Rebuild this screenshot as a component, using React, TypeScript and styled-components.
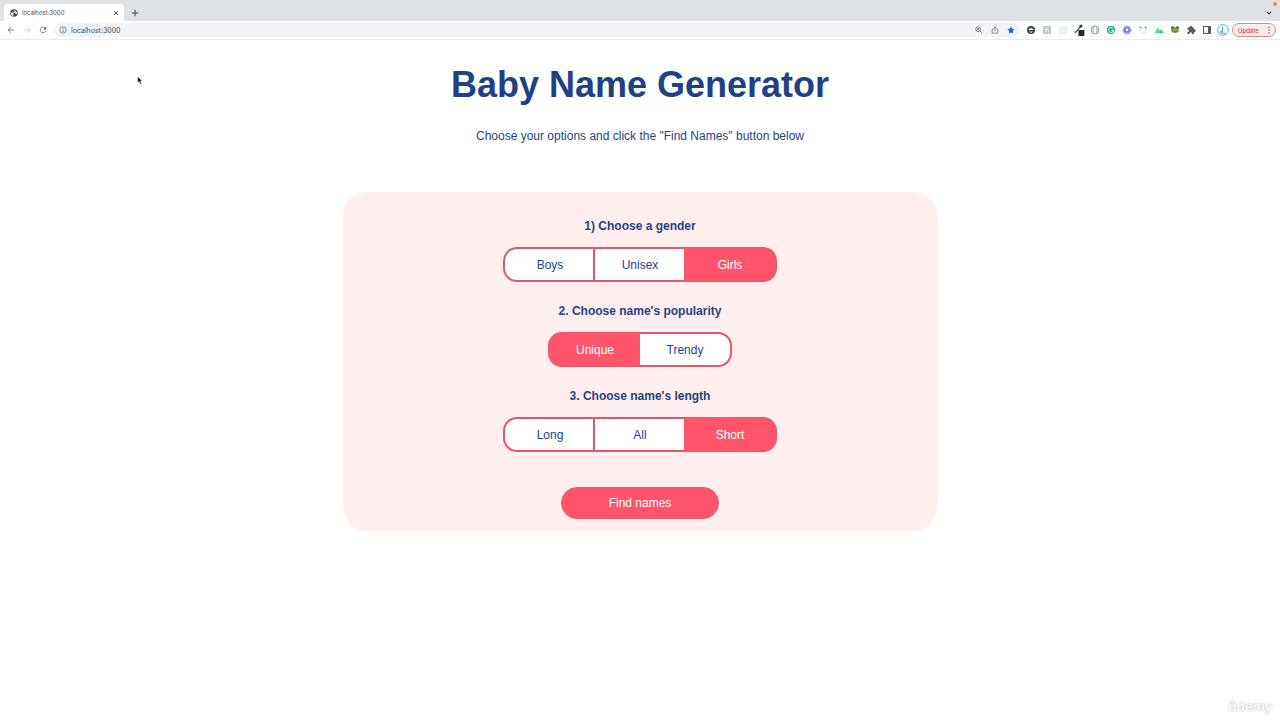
import React, { useState } from "react";
import styled, { createGlobalStyle, css } from "styled-components";

const navy = "#1f4287";
const coral = "#ff5469";
const edge = "#e4566a";

const GlobalStyle = createGlobalStyle`
  * { box-sizing: border-box; }
  body { margin: 0; background: #fff; font-family: "Liberation Sans", Arial, sans-serif; }
  button, input { font: inherit; color: inherit; margin: 0; padding: 0; border: 0; background: none; }
  button { cursor: pointer; }
  svg { display: block; flex: none; }
`;

const Screen = styled.div`
  position: relative;
  min-height: 100vh;
  overflow: hidden;
`;

const TabStrip = styled.div`
  position: relative;
  display: flex;
  align-items: flex-end;
  height: 21px;
  padding: 0 4px;
  background: #dee1e5;
  color: #45494d;
  font-family: Roboto, sans-serif;
  font-size: 6px;
`;

const Tab = styled.div`
  display: flex;
  align-items: center;
  gap: 4px;
  width: 120px;
  height: 17px;
  padding: 0 5px 0 6px;
  border-radius: 4px 4px 0 0;
  background: #fff;
`;

const TabTitle = styled.span`
  flex: 1;
  font-family: Inter, sans-serif;
`;

const StripButton = styled.button`
  display: flex;
  align-items: center;
  justify-content: center;
  width: 6px;
  height: 16px;
`;

const NewTab = styled(StripButton)`
  width: 22px;
`;

const TabMenu = styled(StripButton)`
  margin-left: auto;
  width: 14px;
`;

const Notice = styled.span`
  position: absolute;
  top: 2px;
  right: 3px;
  width: 4px;
  height: 4px;
  border-radius: 50%;
  background: #f08a3c;
`;

const Toolbar = styled.div`
  display: flex;
  align-items: center;
  height: 19px;
  padding: 0 4px 0 3px;
  border-bottom: 1px solid #ebecee;
  background: #fff;
  font-family: Inter, sans-serif;
  font-size: 7px;
`;

const ToolButton = styled.button`
  display: flex;
  align-items: center;
  justify-content: center;
  width: 16px;
  height: 14px;
  flex: none;
`;

const AddressBar = styled.label`
  display: flex;
  align-items: center;
  flex: 1;
  height: 14px;
  margin: 0 3px;
  padding: 0 1px;
  border-radius: 7px;
  background: #f2f3f5;
  color: #4a4d51;
`;

const AddressInput = styled.input`
  flex: 1;
  min-width: 0;
  outline: none;
`;

const UpdateButton = styled.button`
  display: flex;
  align-items: center;
  justify-content: space-between;
  width: 44px;
  height: 14px;
  margin-left: 1px;
  padding: 0 2px 0 5px;
  border: 1px solid #d98a90;
  border-radius: 7px;
  background: #fdecee;
  color: #c8434c;
  font-size: 6px;
  font-weight: 500;
`;

const Page = styled.main`
  display: flex;
  flex-direction: column;
  align-items: center;
  padding: 24px 16px;
  color: ${navy};
  text-align: center;
`;

const Title = styled.h1`
  margin: 0;
  font-size: 36px;
  line-height: 42px;
`;

const Intro = styled.p`
  margin: 22px 0 48px;
  font-size: 12px;
  line-height: 16px;
`;

const Card = styled.form`
  display: flex;
  flex-direction: column;
  align-items: center;
  gap: 20px;
  width: 100%;
  max-width: 594px;
  padding: 25px 16px 12px;
  border-radius: 24px;
  background: #ffeeee;
`;

const Question = styled.fieldset`
  display: flex;
  flex-direction: column;
  align-items: center;
  margin: 0;
  padding: 0;
  border: 0;
`;

const QuestionTitle = styled.legend`
  margin: 0 auto 12px;
  padding: 0;
  font-size: 12px;
  font-weight: bold;
  line-height: 18px;
`;

const Segments = styled.div`
  display: flex;
  padding: 2px;
  border-radius: 14px;
  background: ${edge};
`;

const Segment = styled.button<{ $active: boolean; $divided: boolean }>`
  width: 90px;
  height: 31px;
  background: #fff;
  font-size: 12px;
  line-height: 16px;
  &:first-child { border-radius: 12px 0 0 12px; }
  &:last-child { border-radius: 0 12px 12px 0; }
  ${(p) => p.$divided && css`box-shadow: inset -2px 0 ${edge};`}
  ${(p) => p.$active && css`background: ${coral}; box-shadow: 0 0 0 1px ${coral}; color: #fff;`}
`;

const FindButton = styled.button`
  width: 158px;
  height: 32px;
  margin-top: 15px;
  border: 1px solid #f05468;
  border-radius: 16px;
  background: ${coral};
  color: #fff;
  font-size: 12px;
`;

const Pointer = styled.svg`
  position: absolute;
  top: 76px;
  left: 137px;
`;

const Watermark = styled.span`
  position: absolute;
  right: 8px;
  bottom: 4px;
  color: #fff;
  font-family: "Noto Sans", sans-serif;
  font-size: 13px;
  font-weight: 600;
  line-height: 20px;
  text-shadow: 0 0 2px #bbb, 0 0 1px #ccc;
`;

const Icon = ({ children, size = 10, color = "#5f6368" }: { children: React.ReactNode; size?: number; color?: string }) => (
  <svg width={size} height={size} viewBox="0 0 20 20" fill="none" stroke={color} strokeWidth="2" aria-hidden="true">
    {children}
  </svg>
);

const Globe = () => (
  <Icon size={8} color="none">
    <circle cx="10" cy="10" r="9.5" fill="#45494d" />
    <path d="M2 8l5 1 3 3-2 3v3C4 17 1 13 2 8zM9 2l4 1-1 3-3 1-1 3 5 0 2 3 3-1c0-5-4-10-10-9z" fill="#dfe1e3" />
  </Icon>
);

const extensions = [
  { name: "Mask", icon: <Icon><circle cx="10" cy="10" r="8" fill="#3c3e40" stroke="none" /><path d="M5 10c0-5 10-5 10 0zM6 13h8c-2 3-6 3-8 0z" fill="#fff" stroke="none" /></Icon> },
  { name: "Honey", icon: <Icon><rect x="2" y="2" width="16" height="16" rx="2" fill="#c2c2c2" stroke="none" /><path d="M8 5v10M8 9c5-2 5 1 5 6M11 5l2-1" stroke="#fff" /></Icon> },
  { name: "Blocks", icon: <Icon><rect x="2" y="2" width="16" height="16" rx="1" fill="#ededed" stroke="none" /><circle cx="10" cy="10" r="4" stroke="#fafafa" /></Icon> },
  { name: "Colour picker", icon: <Icon size={12}><path d="M3 15L13 4" stroke="#555" strokeWidth="2.2" /><path d="M11 5l4-3" stroke="#333" strokeWidth="4" /><rect x="9" y="10" width="10" height="10" rx="1" fill="#292929" stroke="none" /></Icon> },
  { name: "JSON viewer", icon: <Icon><circle cx="10" cy="10" r="8" stroke="#777" strokeWidth="1.5" /><path d="M8 6H6v3l-1 1 1 1v3h2M12 6h2v3l1 1-1 1v3h-2" stroke="#777" strokeWidth="1.3" /></Icon> },
  { name: "Grammar", icon: <Icon><circle cx="10" cy="10" r="8.5" fill="#20bd82" stroke="none" /><path d="M14 7a5 5 0 1 0 1 4h-4M15 11v4" stroke="#e4fff4" strokeWidth="1.7" /></Icon> },
  { name: "Loom", icon: <Icon><circle cx="10" cy="10" r="7" stroke="#9799f0" strokeWidth="4" strokeDasharray="4 1" /><circle cx="10" cy="10" r="5.5" fill="#6163e8" stroke="none" /><circle cx="10" cy="10" r="2.8" fill="#fff" stroke="none" /></Icon> },
  { name: "Sketch", icon: <Icon><path d="M4 7c-1 10 8 12 11 8V9" stroke="#dedede" /><path d="M2 3l4 2M6 5l3 3M13 4l4 1-3 2" stroke="#777" strokeWidth="1.8" /></Icon> },
  { name: "Peaks", icon: <Icon><path d="M1 16L8 5l7 11z" fill="#43e79a" stroke="none" /><path d="M10 16l4-8 5 8z" fill="#20ce7d" stroke="none" /></Icon> },
  { name: "Frog", icon: <Icon><ellipse cx="10" cy="10" rx="8" ry="6" fill="#81a64a" stroke="none" /><circle cx="5" cy="5" r="3" fill="#587b2e" stroke="none" /><circle cx="15" cy="5" r="3" fill="#587b2e" stroke="none" /><path d="M4 12h12c-2 4-10 4-12 0z" fill="#b76442" stroke="none" /></Icon> },
  { name: "Extensions", icon: <Icon><path d="M3 5h4c0-5 5-5 5 0h4v4c5 0 5 5 0 5v4h-4c0-5-5-5-5 0H3v-4c4 0 4-5 0-5z" fill="#555a5e" stroke="none" /></Icon> },
  { name: "Side panel", icon: <Icon><rect x="3" y="3" width="14" height="14" stroke="#555a5e" /><path d="M12 3h5v14h-5z" fill="#555a5e" stroke="none" /></Icon> },
  { name: "Profile", icon: <Icon size={12}><circle cx="10" cy="10" r="9" fill="#effaff" stroke="#58a9c7" strokeWidth="1.5" /><path d="M9 4v9M9 13c-3-2-4 3-1 2l6 1" stroke="#4b9fc0" strokeWidth="1.7" /></Icon> },
];

type ChoiceProps = { title: string; options: string[]; initial: string };

function Choice({ title, options, initial }: ChoiceProps) {
  const [value, setValue] = useState(initial);
  return (
    <Question>
      <QuestionTitle>{title}</QuestionTitle>
      <Segments>
        {options.map((option, i) => (
          <Segment
            key={option}
            type="button"
            aria-pressed={option === value}
            $active={option === value}
            $divided={i < options.length - 1 && options[i + 1] !== value}
            onClick={() => setValue(option)}
          >
            {option}
          </Segment>
        ))}
      </Segments>
    </Question>
  );
}

export default function App() {
  return (
    <Screen>
      <GlobalStyle />
      <TabStrip>
        <Tab>
          <Globe />
          <TabTitle>localhost:3000</TabTitle>
          <StripButton aria-label="Close tab">
            <Icon size={6} color="#45494d"><path d="M3 3l14 14M17 3L3 17" strokeWidth="3" /></Icon>
          </StripButton>
        </Tab>
        <NewTab aria-label="New tab">
          <Icon size={8} color="#45494d"><path d="M10 2v16M2 10h16" strokeWidth="2.6" /></Icon>
        </NewTab>
        <TabMenu aria-label="Search tabs">
          <Icon size={6} color="#45494d"><path d="M3 6l7 7 7-7" strokeWidth="3.5" /></Icon>
        </TabMenu>
        <Notice />
      </TabStrip>
      <Toolbar>
        <ToolButton aria-label="Back"><Icon size={8}><path d="M18 10H3M10 3l-7 7 7 7" /></Icon></ToolButton>
        <ToolButton aria-label="Forward"><Icon size={8} color="#c3c6c9"><path d="M2 10h15M10 3l7 7-7 7" /></Icon></ToolButton>
        <ToolButton aria-label="Reload">
          <Icon size={8}><path d="M15.500 5A7 7 0 1 0 17 12" /><path d="M18 1v8h-8z" fill="#5f6368" stroke="none" /></Icon>
        </ToolButton>
        <AddressBar>
          <ToolButton as="span">
            <Icon size={8}><circle cx="10" cy="10" r="8" strokeWidth="1.8" /><path d="M10 9v6M10 5v2" /></Icon>
          </ToolButton>
          <AddressInput aria-label="Address" defaultValue="localhost:3000" />
          <ToolButton aria-label="Zoom"><Icon size={8}><circle cx="8" cy="8" r="6" /><path d="M12.500 12.500L18 18M5 8h6M8 5v6" /></Icon></ToolButton>
          <ToolButton aria-label="Share"><Icon size={8}><path d="M6 8H3v10h14V8h-3M10 13V2M6 6l4-4 4 4" strokeWidth="1.7" /></Icon></ToolButton>
          <ToolButton aria-label="Bookmark"><Icon size={8}><path d="M10 1l3 6 6 1-4.500 4 1 7L10 16l-5.500 3 1-7L1 8l6-1z" fill="#1967c8" stroke="none" /></Icon></ToolButton>
        </AddressBar>
        {extensions.map((e) => <ToolButton key={e.name} aria-label={e.name}>{e.icon}</ToolButton>)}
        <UpdateButton>
          Update
          <Icon size={8} color="none">
            <circle cx="10" cy="3" r="2" fill="#c8434c" /><circle cx="10" cy="10" r="2" fill="#c8434c" /><circle cx="10" cy="17" r="2" fill="#c8434c" />
          </Icon>
        </UpdateButton>
      </Toolbar>
      <Page>
        <Title>Baby Name Generator</Title>
        <Intro>Choose your options and click the "Find Names" button below</Intro>
        <Card onSubmit={(e) => e.preventDefault()}>
          <Choice title="1) Choose a gender" options={["Boys", "Unisex", "Girls"]} initial="Girls" />
          <Choice title="2. Choose name's popularity" options={["Unique", "Trendy"]} initial="Unique" />
          <Choice title="3. Choose name's length" options={["Long", "All", "Short"]} initial="Short" />
          <FindButton type="submit">Find names</FindButton>
        </Card>
      </Page>
      <Pointer width="6" height="9" viewBox="0 0 12 18" aria-hidden="true">
        <path d="M1 1v13l3-3 2 5 3-1-2-5h4z" fill="#111" stroke="#fff" />
      </Pointer>
      <Watermark>ûdemy</Watermark>
    </Screen>
  );
}
